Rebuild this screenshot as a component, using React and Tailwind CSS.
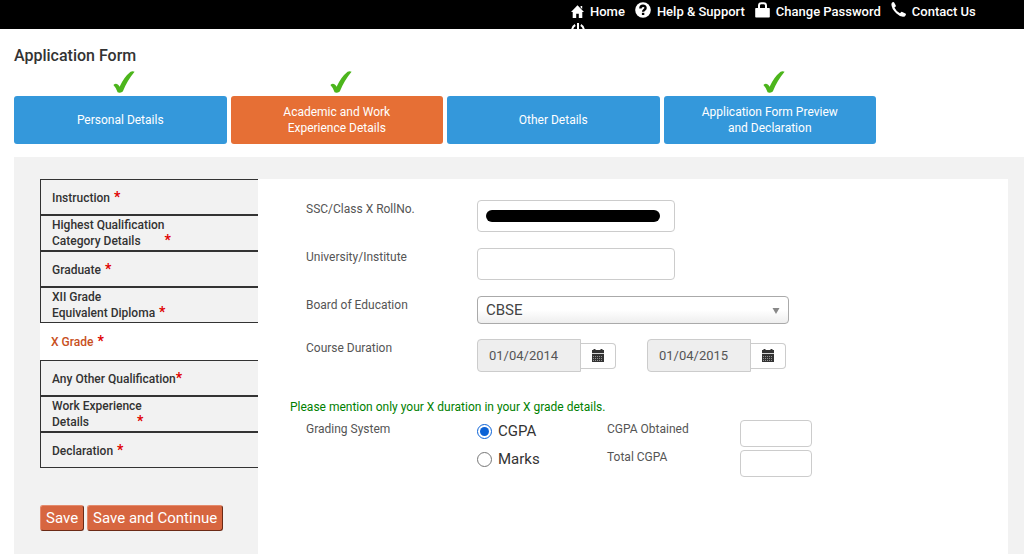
import React, { useState } from 'react';

const steps = [
    { label: ['Personal Details'], done: true, active: false },
    { label: ['Academic and Work', 'Experience Details'], done: true, active: true },
    { label: ['Other Details'], done: false, active: false },
    { label: ['Application Form Preview', 'and Declaration'], done: true, active: false },
];

const sections = [
    { lines: ['Instruction'], star: 'ml-1' },
    { lines: ['Highest Qualification', 'Category Details'], star: 'ml-6' },
    { lines: ['Graduate'], star: 'ml-1' },
    { lines: ['XII Grade', 'Equivalent Diploma'], star: 'ml-1' },
    { lines: ['X Grade'], star: 'ml-1', active: true },
    { lines: ['Any Other Qualification'], star: '' },
    { lines: ['Work Experience', 'Details'], star: 'ml-12' },
    { lines: ['Declaration'], star: 'ml-1' },
];

const HomeIcon = () => (
    <svg className="w-[13px] h-[13px]" viewBox="0 0 13 13" fill="currentColor" aria-hidden="true">
        <path d="M6.5 0.3 L13 7 H11.3 V13 H7.8 V8.8 H5.2 V13 H1.7 V7 H0 Z" />
        <path d="M9.6 1 H11.2 V4 L9.6 2.6 Z" />
    </svg>
);

const HelpIcon = () => (
    <svg className="w-4 h-4 -mt-1" viewBox="0 0 16 16" aria-hidden="true">
        <circle cx="8" cy="8" r="7.8" fill="currentColor" />
        <path d="M5.4 6.4 C5.4 3 10.6 3 10.6 6 C10.6 7.8 8.1 7.7 8.1 9.8" fill="none" stroke="#000" strokeWidth="2.4" />
        <rect x="6.9" y="10.8" width="2.4" height="2.2" fill="#000" />
    </svg>
);

const LockIcon = () => (
    <svg className="w-[15px] h-4 -mt-1" viewBox="0 0 15 16" aria-hidden="true">
        <path d="M4 8 V3.6 Q4 1.2 6.4 1.2 H8.6 Q11 1.2 11 3.6 V8" fill="none" stroke="currentColor" strokeWidth="2" />
        <rect x="0.2" y="6" width="14.6" height="9.6" rx="0.8" fill="currentColor" />
    </svg>
);

const PhoneIcon = () => (
    <svg className="w-[15px] h-[15px] -mt-1" viewBox="0 0 15 15" fill="currentColor" aria-hidden="true">
        <path d="M0.4 2 Q0.6 0.4 2 0.1 Q2.9 0 3.3 0.8 L4.8 3.6 Q5 4.2 4.4 4.7 L3.4 5.4 Q5 9 9 11.3 L10.2 10 Q10.7 9.6 11.3 9.9 L14.4 11.6 Q15.2 12.1 14.8 12.9 Q14 14.9 12 14.8 Q8.6 14.4 5.2 11.2 Q0.2 6.6 0.4 2 Z" />
    </svg>
);

const PowerIcon = () => (
    <svg className="w-[14px] h-[14px]" viewBox="0 0 14 14" fill="none" stroke="currentColor" strokeWidth="2" aria-hidden="true">
        <path d="M4.2 2 A5.8 5.8 0 1 0 9.8 2" />
        <path d="M7 0 V7" />
    </svg>
);

const CalendarIcon = () => (
    <svg className="w-3 h-[13px]" viewBox="0 0 12 13" aria-hidden="true">
        <rect x="1.5" y="0" width="2" height="2" fill="#333" />
        <rect x="8.5" y="0" width="2" height="2" fill="#333" />
        <rect x="0" y="1" width="12" height="3.2" fill="#333" />
        <rect x="0" y="5" width="12" height="8" fill="#333" />
        <path d="M1 7.5 H11 M1 9.5 H11 M1 11.5 H11" stroke="#aaa" strokeWidth="0.8" strokeDasharray="1 1" />
    </svg>
);

const Tick = () => (
    <svg className="w-[22px] h-[22px]" viewBox="0 0 22 22" fill="#4cb51c" aria-hidden="true">
        <path d="M0.4 14 Q2.6 11.8 4.8 13.4 Q6 14.4 6.6 15.8 Q11 6 17.6 0.8 Q19.6 -0.4 21.6 0.8 Q14.6 9 9.8 20.4 Q6.8 22.4 4.6 21.2 Q3.4 17 0.4 14 Z" />
    </svg>
);

const navLinks = [
    { label: 'Home', icon: <HomeIcon /> },
    { label: 'Help & Support', icon: <HelpIcon /> },
    { label: 'Change Password', icon: <LockIcon /> },
    { label: 'Contact Us', icon: <PhoneIcon /> },
];

const DateField = ({ label, value }) => (
    <div className="flex items-center">
        <input
            type="text"
            aria-label={label}
            defaultValue={value}
            readOnly
            className="w-[104px] h-[33px] px-[11px] border border-[#ccc] rounded-l bg-[#eee] text-[13px] text-[#555]"
        />
        <button type="button" aria-label={`Pick ${label}`} className="flex items-center justify-center w-[35px] h-[26px] border border-l-0 border-[#ccc] rounded-r bg-white">
            <CalendarIcon />
        </button>
    </div>
);

const App = () => {
    const [grading, setGrading] = useState('cgpa');
    const [board, setBoard] = useState('CBSE');

    return (
        <div className="flex flex-col h-screen overflow-hidden bg-white font-[Roboto,sans-serif] text-[#333]">
            <header className="shrink-0 h-[29px] overflow-hidden bg-black text-white">
                <nav className="ml-[571px]">
                    <div className="flex items-center gap-[10px] h-[23px]">
                        {navLinks.map((link) => (
                            <a key={link.label} href="#" className="flex items-center gap-[6px] text-[13px] font-medium whitespace-nowrap">
                                {link.icon}
                                {link.label}
                            </a>
                        ))}
                    </div>
                    <a href="#" aria-label="Logout" className="block">
                        <PowerIcon />
                    </a>
                </nav>
            </header>

            <h1 className="mt-[17px] ml-[14px] text-base leading-5 font-medium">Application Form</h1>

            <nav className="grid grid-cols-4 gap-1 mt-1 ml-[14px] w-[862px] max-w-full">
                {steps.map((step) => (
                    <div key={step.label[0]} className="flex flex-col">
                        <div className="flex justify-center h-[26px] pt-px pl-2">{step.done && <Tick />}</div>
                        <a
                            href="#"
                            className={`flex flex-col items-center justify-center h-12 pb-px rounded-[3px] text-xs leading-4 text-white ${step.active ? 'bg-[#e66f35]' : 'bg-[#3498db]'}`}
                        >
                            {step.label.map((line) => (
                                <span key={line}>{line}</span>
                            ))}
                        </a>
                    </div>
                ))}
            </nav>

            <div className="flex flex-1 mt-[13px] ml-[14px] pt-[22px] pl-[26px] pr-4 bg-[#f2f2f2]">
                <aside className="shrink-0 w-[218px]">
                    <ul>
                        {sections.map((section) => (
                            <li
                                key={section.lines[0]}
                                className={`flex border-[#333] ${section.active ? 'h-[37px] bg-white text-[#c8501e]' : 'h-9 border border-r-0'}`}
                            >
                                <a href="#" className="flex flex-col justify-center w-full pl-[11px] text-xs leading-[15px] font-medium">
                                    {section.lines.map((line, i) => (
                                        <span key={line} className="h-[15px]">
                                            {line}
                                            {i === section.lines.length - 1 && (
                                                <span className={`text-sm leading-none font-bold text-[#e00000] ${section.star}`}>*</span>
                                            )}
                                        </span>
                                    ))}
                                </a>
                            </li>
                        ))}
                    </ul>
                    <div className="flex gap-[3px] mt-[37px]">
                        <button type="button" className="h-[26px] px-[5px] border border-[#6b2a16] border-t-[#e58a6c] border-l-[#e58a6c] rounded-[3px] bg-[#d76640] text-[15px] leading-6 text-white">
                            Save
                        </button>
                        <button type="button" className="h-[26px] px-[5px] border border-[#6b2a16] border-t-[#e58a6c] border-l-[#e58a6c] rounded-[3px] bg-[#d76640] text-[15px] leading-6 text-white">
                            Save and Continue
                        </button>
                    </div>
                </aside>

                <form className="flex-1 pt-[21px] pl-12 bg-white text-xs leading-[18px] text-[#555]">
                    <div className="flex mb-4">
                        <label htmlFor="roll" className="w-[171px]">SSC/Class X RollNo.</label>
                        <div className="relative">
                            <input id="roll" type="text" className="block w-[198px] h-8 px-3 border border-[#ccc] rounded" />
                            <span className="absolute top-[10px] left-[9px] w-[174px] h-3 rounded-full bg-black" />
                        </div>
                    </div>
                    <div className="flex mb-4">
                        <label htmlFor="university" className="w-[171px]">University/Institute</label>
                        <input id="university" type="text" className="w-[198px] h-8 px-3 border border-[#ccc] rounded" />
                    </div>
                    <div className="flex mb-[15px]">
                        <label htmlFor="board" className="w-[171px]">Board of Education</label>
                        <div className="relative">
                            <select
                                id="board"
                                value={board}
                                onChange={(e) => setBoard(e.target.value)}
                                className="block appearance-none w-[312px] h-7 px-2 border border-[#aaa] rounded bg-linear-to-b from-white from-50% to-[#eee] text-[15px] leading-6 text-[#444]"
                            >
                                <option>CBSE</option>
                                <option>ICSE</option>
                            </select>
                            <svg className="absolute top-3 right-[9px] w-2 h-[6px] pointer-events-none" viewBox="0 0 8 6" fill="#888" aria-hidden="true">
                                <path d="M0.5 0 H7.5 L4 6 Z" />
                            </svg>
                        </div>
                    </div>
                    <div className="flex mb-[26px]">
                        <span className="w-[171px]">Course Duration</span>
                        <div className="flex gap-[31px]">
                            <DateField label="start date" value="01/04/2014" />
                            <DateField label="end date" value="01/04/2015" />
                        </div>
                    </div>

                    <p className="-ml-4 text-[#008000]">Please mention only your X duration in your X grade details.</p>

                    <div className="flex pt-1">
                        <span className="w-[171px]">Grading System</span>
                        <div className="flex flex-col gap-[6px] w-[130px] text-[15px] leading-[22px] text-[#333]">
                            <label className="flex items-center gap-[6px]">
                                <input type="radio" name="grading" checked={grading === 'cgpa'} onChange={() => setGrading('cgpa')} className="w-[15px] h-[15px] accent-[#0b62d6]" />
                                CGPA
                            </label>
                            <label className="flex items-center gap-[6px]">
                                <input type="radio" name="grading" checked={grading === 'marks'} onChange={() => setGrading('marks')} className="w-[15px] h-[15px] accent-[#0b62d6]" />
                                Marks
                            </label>
                        </div>
                        <div className="flex flex-col gap-[10px] w-[133px]">
                            <label htmlFor="obtained">CGPA Obtained</label>
                            <label htmlFor="total">Total CGPA</label>
                        </div>
                        <div className="flex flex-col gap-[3px]">
                            <input id="obtained" type="text" className="w-[72px] h-[27px] px-2 border border-[#ccc] rounded" />
                            <input id="total" type="text" className="w-[72px] h-[27px] px-2 border border-[#ccc] rounded" />
                        </div>
                    </div>
                </form>
            </div>
        </div>
    );
};

export default App;
